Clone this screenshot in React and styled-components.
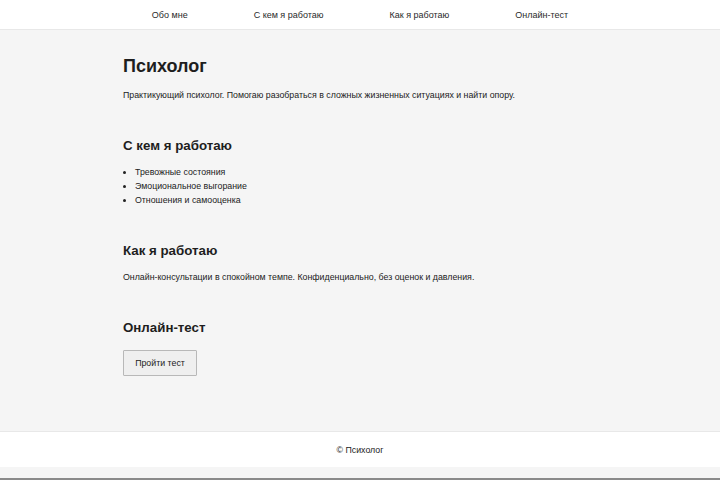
import React from 'react'
import styled, { createGlobalStyle } from 'styled-components'

const GlobalStyle = createGlobalStyle`
  html, body {
    margin: 0;
    padding: 0;
    background: #f5f5f5;
    font-family: "Liberation Sans", Arial, sans-serif;
    color: #222;
  }
`

const nav = ['Обо мне', 'С кем я работаю', 'Как я работаю', 'Онлайн-тест']
const topics = ['Тревожные состояния', 'Эмоциональное выгорание', 'Отношения и самооценка']

export default function App() {
  return (
    <>
      <GlobalStyle />
      <Header>
        <Nav>
          {nav.map((item) => (
            <NavLink key={item} href="#">{item}</NavLink>
          ))}
        </Nav>
      </Header>

      <Main>
        <Title>Психолог</Title>
        <Text>Практикующий психолог. Помогаю разобраться в сложных жизненных ситуациях и найти опору.</Text>

        <Section>
          <Heading>С кем я работаю</Heading>
          <List>
            {topics.map((t) => (
              <Item key={t}>{t}</Item>
            ))}
          </List>
        </Section>

        <Section>
          <Heading>Как я работаю</Heading>
          <Text>Онлайн-консультации в спокойном темпе. Конфиденциально, без оценок и давления.</Text>
        </Section>

        <Section>
          <Heading>Онлайн-тест</Heading>
          <Button>Пройти тест</Button>
        </Section>
      </Main>

      <Footer>© Психолог</Footer>
      <BottomEdge />
    </>
  )
}

const Header = styled.header`
  background: #fff;
  border-bottom: 1px solid #e8e8e8;
  height: 29px;
  display: flex;
  align-items: center;
  justify-content: center;
`

const Nav = styled.nav`
  display: flex;
  gap: 66px;
`

const NavLink = styled.a`
  font-size: 9px;
  color: #2a2a2a;
  text-decoration: none;
`

const Main = styled.main`
  width: 474px;
  margin: 0 auto;
  padding: 24px 0 55px;
`

const Title = styled.h1`
  font-size: 18px;
  line-height: 24px;
  font-weight: 700;
  margin: 0 0 10px;
  color: #1e1e1e;
`

const Text = styled.p`
  font-size: 8.8px;
  line-height: 14px;
  margin: 0;
  color: #222;
`

const Section = styled.section`
  margin-top: 35px;
`

const Heading = styled.h2`
  font-size: 13.3px;
  line-height: 18px;
  font-weight: 700;
  margin: 0 0 10px;
  color: #1e1e1e;
`

const List = styled.ul`
  margin: 0;
  padding-left: 12px;
  font-size: 8.8px;
  line-height: 14px;
  color: #222;
`

const Item = styled.li``

const Button = styled.button`
  margin-top: 3px;
  width: 74px;
  height: 26px;
  font-family: inherit;
  font-size: 8.8px;
  color: #222;
  background: #efefef;
  border: 1px solid #b8b8b8;
  border-radius: 1px;
  cursor: pointer;
`

const Footer = styled.footer`
  background: #fff;
  border-top: 1px solid #e8e8e8;
  height: 35px;
  display: flex;
  align-items: center;
  justify-content: center;
  font-size: 8.8px;
  color: #222;
`

const BottomEdge = styled.div`
  margin-top: 11px;
  height: 2px;
  background: #8a8a8a;
`
